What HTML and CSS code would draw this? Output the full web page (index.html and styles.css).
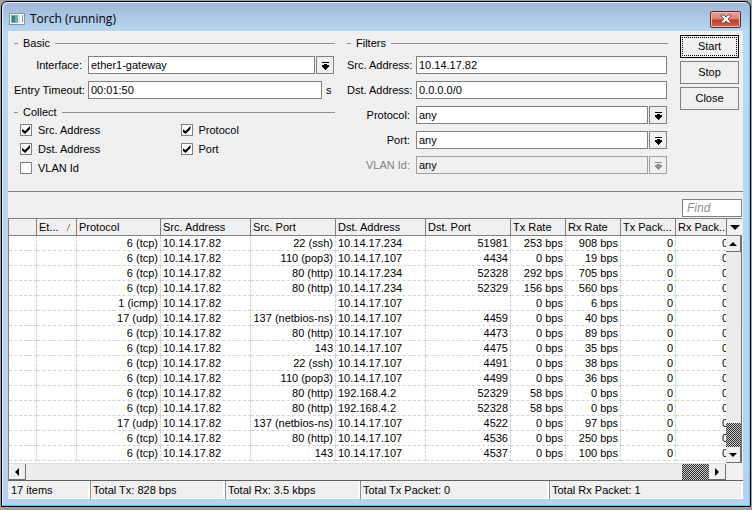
FILE: index.html
```html
<!DOCTYPE html>
<html lang="en">
<head>
<meta charset="utf-8">
<title>Torch (running)</title>
<link rel="stylesheet" href="styles.css">
</head>
<body>
<svg class="sprite" aria-hidden="true">
  <symbol id="drop" viewBox="0 0 8 9"><path d="M1 1h7v1H1zM3 3h3v1h2v2H7v1H6v1H5v1H4V8H3V7H2V6H1V4h2z" fill="currentColor"/></symbol>
  <symbol id="tri" viewBox="0 0 8 4"><path d="M0 0h8L4 4z" fill="currentColor"/></symbol>
</svg>
<main class="window">
  <header class="titlebar">
    <svg class="app-icon" width="16" height="12" viewBox="0 0 16 12"><rect width="16" height="12" fill="#8b9298"/><rect x="1" y="1" width="14" height="10" fill="#f4f8f8"/><rect x="2" y="2" width="7" height="8" fill="#6fb0a8"/><rect x="3" y="3" width="3" height="6" fill="#367f83"/><rect x="9" y="2" width="2" height="8" fill="#d5e8e4"/><rect x="13" y="2" width="1" height="7" fill="#65aaa1"/></svg>
    <h1>Torch (running)</h1>
    <button class="close" aria-label="Close window"><svg width="12" height="10" viewBox="0 0 12 10"><path d="M1 1h3l2 2 2-2h3v1L8 5l3 3v1H8L6 7 4 9H1V8l3-3-3-3z" fill="#f8f4f4" stroke="#6d5558" stroke-width="1"/></svg></button>
  </header>
  <div class="client">
    <form class="top">
      <div class="column">
        <fieldset>
          <legend>Basic</legend>
          <div class="rows">
            <div class="row basic"><label for="iface">Interface:</label><input id="iface" value="ether1-gateway"><button type="button" class="drop" aria-label="Choose interface"><svg><use href="#drop"/></svg></button></div>
            <div class="row basic"><label for="timeout">Entry Timeout:</label><input id="timeout" value="00:01:50"><span class="unit">s</span></div>
          </div>
        </fieldset>
        <fieldset class="collect">
          <legend>Collect</legend>
          <div class="checks">
            <label><input type="checkbox" checked>Src. Address</label>
            <label><input type="checkbox" checked>Protocol</label>
            <label><input type="checkbox" checked>Dst. Address</label>
            <label><input type="checkbox" checked>Port</label>
            <label><input type="checkbox">VLAN Id</label>
          </div>
        </fieldset>
      </div>
      <fieldset class="column">
        <legend>Filters</legend>
        <div class="rows">
          <div class="row"><label for="src">Src. Address:</label><input id="src" value="10.14.17.82"></div>
          <div class="row"><label for="dst">Dst. Address:</label><input id="dst" value="0.0.0.0/0"></div>
          <div class="row"><label for="proto">Protocol:</label><input id="proto" value="any"><button type="button" class="drop" aria-label="Choose protocol"><svg><use href="#drop"/></svg></button></div>
          <div class="row"><label for="port">Port:</label><input id="port" value="any"><button type="button" class="drop" aria-label="Choose port"><svg><use href="#drop"/></svg></button></div>
          <div class="row off"><label for="vlan">VLAN Id:</label><input id="vlan" value="any" disabled><button type="button" class="drop" aria-label="Choose VLAN" disabled><svg><use href="#drop"/></svg></button></div>
        </div>
      </fieldset>
      <div class="actions">
        <button type="button" class="default">Start</button>
        <button type="button">Stop</button>
        <button type="button">Close</button>
      </div>
    </form>
    <div class="findbar"><input placeholder="Find" aria-label="Find"></div>
    <div class="list">
      <div class="viewport">
        <table>
          <colgroup><col class="w28"><col class="w40"><col class="w84"><col class="w90"><col class="w85"><col class="w90"><col class="w85"><col class="w55"><col class="w55"><col class="w55"><col class="w55"></colgroup>
          <thead><tr><th></th><th><span class="sorted">Et...<svg width="5" height="7" viewBox="0 0 5 7"><path d="M1 7L4 0" stroke="#888" fill="none"/></svg></span></th><th>Protocol</th><th>Src. Address</th><th>Src. Port</th><th>Dst. Address</th><th>Dst. Port</th><th>Tx Rate</th><th>Rx Rate</th><th>Tx Pack...</th><th>Rx Pack...</th></tr></thead>
          <tbody>
            <tr><td></td><td></td><td>6 (tcp)</td><td>10.14.17.82</td><td>22 (ssh)</td><td>10.14.17.234</td><td>51981</td><td>253 bps</td><td>908 bps</td><td>0</td><td>0</td></tr>
            <tr><td></td><td></td><td>6 (tcp)</td><td>10.14.17.82</td><td>110 (pop3)</td><td>10.14.17.107</td><td>4434</td><td>0 bps</td><td>19 bps</td><td>0</td><td>0</td></tr>
            <tr><td></td><td></td><td>6 (tcp)</td><td>10.14.17.82</td><td>80 (http)</td><td>10.14.17.234</td><td>52328</td><td>292 bps</td><td>705 bps</td><td>0</td><td>0</td></tr>
            <tr><td></td><td></td><td>6 (tcp)</td><td>10.14.17.82</td><td>80 (http)</td><td>10.14.17.234</td><td>52329</td><td>156 bps</td><td>560 bps</td><td>0</td><td>0</td></tr>
            <tr><td></td><td></td><td>1 (icmp)</td><td>10.14.17.82</td><td></td><td>10.14.17.107</td><td></td><td>0 bps</td><td>6 bps</td><td>0</td><td>0</td></tr>
            <tr><td></td><td></td><td>17 (udp)</td><td>10.14.17.82</td><td>137 (netbios-ns)</td><td>10.14.17.107</td><td>4459</td><td>0 bps</td><td>40 bps</td><td>0</td><td>0</td></tr>
            <tr><td></td><td></td><td>6 (tcp)</td><td>10.14.17.82</td><td>80 (http)</td><td>10.14.17.107</td><td>4473</td><td>0 bps</td><td>89 bps</td><td>0</td><td>0</td></tr>
            <tr><td></td><td></td><td>6 (tcp)</td><td>10.14.17.82</td><td>143</td><td>10.14.17.107</td><td>4475</td><td>0 bps</td><td>35 bps</td><td>0</td><td>0</td></tr>
            <tr><td></td><td></td><td>6 (tcp)</td><td>10.14.17.82</td><td>22 (ssh)</td><td>10.14.17.107</td><td>4491</td><td>0 bps</td><td>38 bps</td><td>0</td><td>0</td></tr>
            <tr><td></td><td></td><td>6 (tcp)</td><td>10.14.17.82</td><td>110 (pop3)</td><td>10.14.17.107</td><td>4499</td><td>0 bps</td><td>36 bps</td><td>0</td><td>0</td></tr>
            <tr><td></td><td></td><td>6 (tcp)</td><td>10.14.17.82</td><td>80 (http)</td><td>192.168.4.2</td><td>52329</td><td>58 bps</td><td>0 bps</td><td>0</td><td>0</td></tr>
            <tr><td></td><td></td><td>6 (tcp)</td><td>10.14.17.82</td><td>80 (http)</td><td>192.168.4.2</td><td>52328</td><td>58 bps</td><td>0 bps</td><td>0</td><td>0</td></tr>
            <tr><td></td><td></td><td>17 (udp)</td><td>10.14.17.82</td><td>137 (netbios-ns)</td><td>10.14.17.107</td><td>4522</td><td>0 bps</td><td>97 bps</td><td>0</td><td>0</td></tr>
            <tr><td></td><td></td><td>6 (tcp)</td><td>10.14.17.82</td><td>80 (http)</td><td>10.14.17.107</td><td>4536</td><td>0 bps</td><td>250 bps</td><td>0</td><td>0</td></tr>
            <tr><td></td><td></td><td>6 (tcp)</td><td>10.14.17.82</td><td>143</td><td>10.14.17.107</td><td>4537</td><td>0 bps</td><td>100 bps</td><td>0</td><td>0</td></tr>
          </tbody>
        </table>
      </div>
      <div class="side">
        <button class="columns" aria-label="Columns"><svg width="10" height="5"><use href="#tri"/></svg></button>
        <div class="vscroll">
          <button class="arrow up" aria-label="Scroll up"><svg width="8" height="4"><use href="#tri"/></svg></button>
          <span class="track"></span>
          <span class="thumb"></span>
          <button class="arrow" aria-label="Scroll down"><svg width="8" height="4"><use href="#tri"/></svg></button>
        </div>
      </div>
      <div class="hscroll">
        <button class="arrow left" aria-label="Scroll left"><svg width="8" height="4"><use href="#tri"/></svg></button>
        <span class="track"></span>
        <span class="thumb"></span>
        <button class="arrow right" aria-label="Scroll right"><svg width="8" height="4"><use href="#tri"/></svg></button>
      </div>
    </div>
    <footer class="status"><span>17 items</span><span>Total Tx: 828 bps</span><span>Total Rx: 3.5 kbps</span><span>Total Tx Packet: 0</span><span>Total Rx Packet: 1</span></footer>
  </div>
</main>
</body>
</html>
```

FILE: styles.css
```css
* { box-sizing: border-box; }
body { margin: 0; padding: 1px 1px 3px; min-height: 100vh; display: flex; background: #a0a0a0; font: 11px/13px "Liberation Sans", Arial, sans-serif; color: #000; }
button, input { font: inherit; color: inherit; border-radius: 0; margin: 0; }
button { padding: 0; display: flex; align-items: center; justify-content: center; background: #f0f0f0; border: 1px solid #808080; }
.sprite { display: none; }

.window { flex: 1; min-width: 0; display: flex; flex-direction: column; padding: 0 7px 7px 6px; border: 1px solid #000; border-radius: 6px 6px 0 0; background: linear-gradient(#a0b6d8 0, #b9d8f2 30px, #b9d1ee); box-shadow: inset -1px -1px #3fd0f0, inset 1px 1px #e4eefa; }
.titlebar { height: 29px; display: flex; align-items: center; padding: 5px 2px 0 1px; }
.titlebar h1 { flex: 1; margin: 0 0 0 5px; font: 12px/16px "Open Sans", sans-serif; }
.close { width: 31px; height: 17px; border-color: #5c2a2c; border-radius: 2px; background: linear-gradient(#e8a59b 0, #d97f74 48%, #c03a26 52%, #d4674c); box-shadow: inset 0 0 0 1px #eebab2; }

.client { flex: 1; display: flex; flex-direction: column; background: #f0f0f0; }
.top { display: flex; gap: 12px; padding: 6px 4px 17px 6px; border-bottom: 1px solid #808080; }
.column { flex: 1; min-width: 0; }
fieldset { margin: 0; padding: 0; border: 0; border-top: 1px solid #909090; min-width: 0; }
legend { margin-left: 4px; padding: 0 5px; }
.rows { display: flex; flex-direction: column; gap: 7px; padding-top: 6px; }
.row { display: flex; gap: 1px; height: 18px; padding-right: 1px; }
.row label { width: 63px; margin-right: 5px; text-align: right; line-height: 18px; white-space: nowrap; }
.row.basic label { width: 68px; }
.row input { flex: 1; min-width: 0; padding: 0 2px; border: 1px solid #808080; background: #fff; }
.row .drop { width: 18px; }
.drop svg { width: 8px; height: 9px; }
.unit { width: 11px; padding-left: 3px; line-height: 18px; }
.row.off { color: #808080; }
.off input { background: #f0f0f0; color: #000; border-color: #a0a0a0; }
.off .drop { color: #909090; border-color: #a0a0a0; }
.collect { margin-top: 7px; }
.checks { display: grid; grid-template-columns: 1fr 1fr; gap: 7px 6px; padding: 5px 0 0 6px; }
.checks label { display: flex; align-items: center; gap: 6px; height: 12px; }
.checks input { appearance: none; display: grid; place-items: center; width: 12px; height: 12px; border: 1px solid #808080; background: #fff; }
.checks input:checked::before { content: ""; width: 8px; height: 8px; background: #000; clip-path: polygon(0 38%, 38% 62%, 100% 0, 100% 38%, 38% 100%, 0 70%); }
.actions { width: 59px; margin-top: -2px; display: flex; flex-direction: column; gap: 3px; }
.actions button { height: 23px; }
.actions .default { border-color: #000; outline: 1px dotted #000; outline-offset: -3px; }

.findbar { display: flex; justify-content: flex-end; padding: 7px 1px 1px; }
.findbar input { width: 60px; height: 18px; padding: 0 4px; border: 1px solid #808080; background: #fff; font-size: 12px; font-style: italic; }
.findbar input::placeholder { color: #909090; opacity: 1; }

.list { flex: 1; display: grid; grid-template-columns: 1fr 16px; grid-template-rows: 1fr 17px; padding-right: 1px; border-left: 1px solid #808080; border-bottom: 1px solid #606060; }
.viewport { overflow: hidden; min-width: 0; background: #fff; }
table { width: 722px; table-layout: fixed; border-spacing: 0; }
.w28 { width: 28px; } .w40 { width: 40px; } .w55 { width: 55px; } .w84 { width: 84px; } .w85 { width: 85px; } .w90 { width: 90px; }
th, td { padding: 0 2px; white-space: nowrap; overflow: hidden; }
th { height: 18px; padding-right: 0; text-align: left; font-weight: normal; background: #f0f0f0; border: solid #808080; border-width: 1px 1px 1px 0; }
.sorted { display: flex; align-items: center; justify-content: space-between; padding-right: 5px; }
td { height: 15px; line-height: 14px; text-align: right; border-right: 1px dashed #d4d4d4; border-bottom: 1px dashed #d4d4d4; }
td:nth-child(4), td:nth-child(6) { text-align: left; }
.side { display: flex; flex-direction: column; }
.columns { height: 18px; border-width: 1px 0 1px 1px; }
.vscroll { flex: 1; display: flex; flex-direction: column; background: #ececec; border-right: 1px solid #707070; }
.hscroll { display: flex; background: #ececec; border-top: 1px solid #dcdcdc; }
.track { flex: 1; }
.arrow { width: 17px; height: 16px; border: solid #707070; border-width: 0 1px 1px 0; }
.vscroll .arrow { width: 100%; }
.up svg { transform: rotate(180deg); }
.left svg { transform: rotate(90deg); }
.right svg { transform: rotate(-90deg); }
.thumb { background: repeating-conic-gradient(#303030 0 25%, #c8c8c8 0 50%) 0 0 / 2px 2px; }
.vscroll .thumb { height: 24px; }
.hscroll .thumb { width: 27px; }

.status { display: grid; grid-template-columns: 81px 135px 135px 189px 1fr; height: 18px; padding-left: 1px; border-bottom: 1px solid #fff; }
.status span { padding-left: 2px; line-height: 18px; border-right: 2px solid #fff; }
.status span + span { border-left: 1px solid #909090; }
```
